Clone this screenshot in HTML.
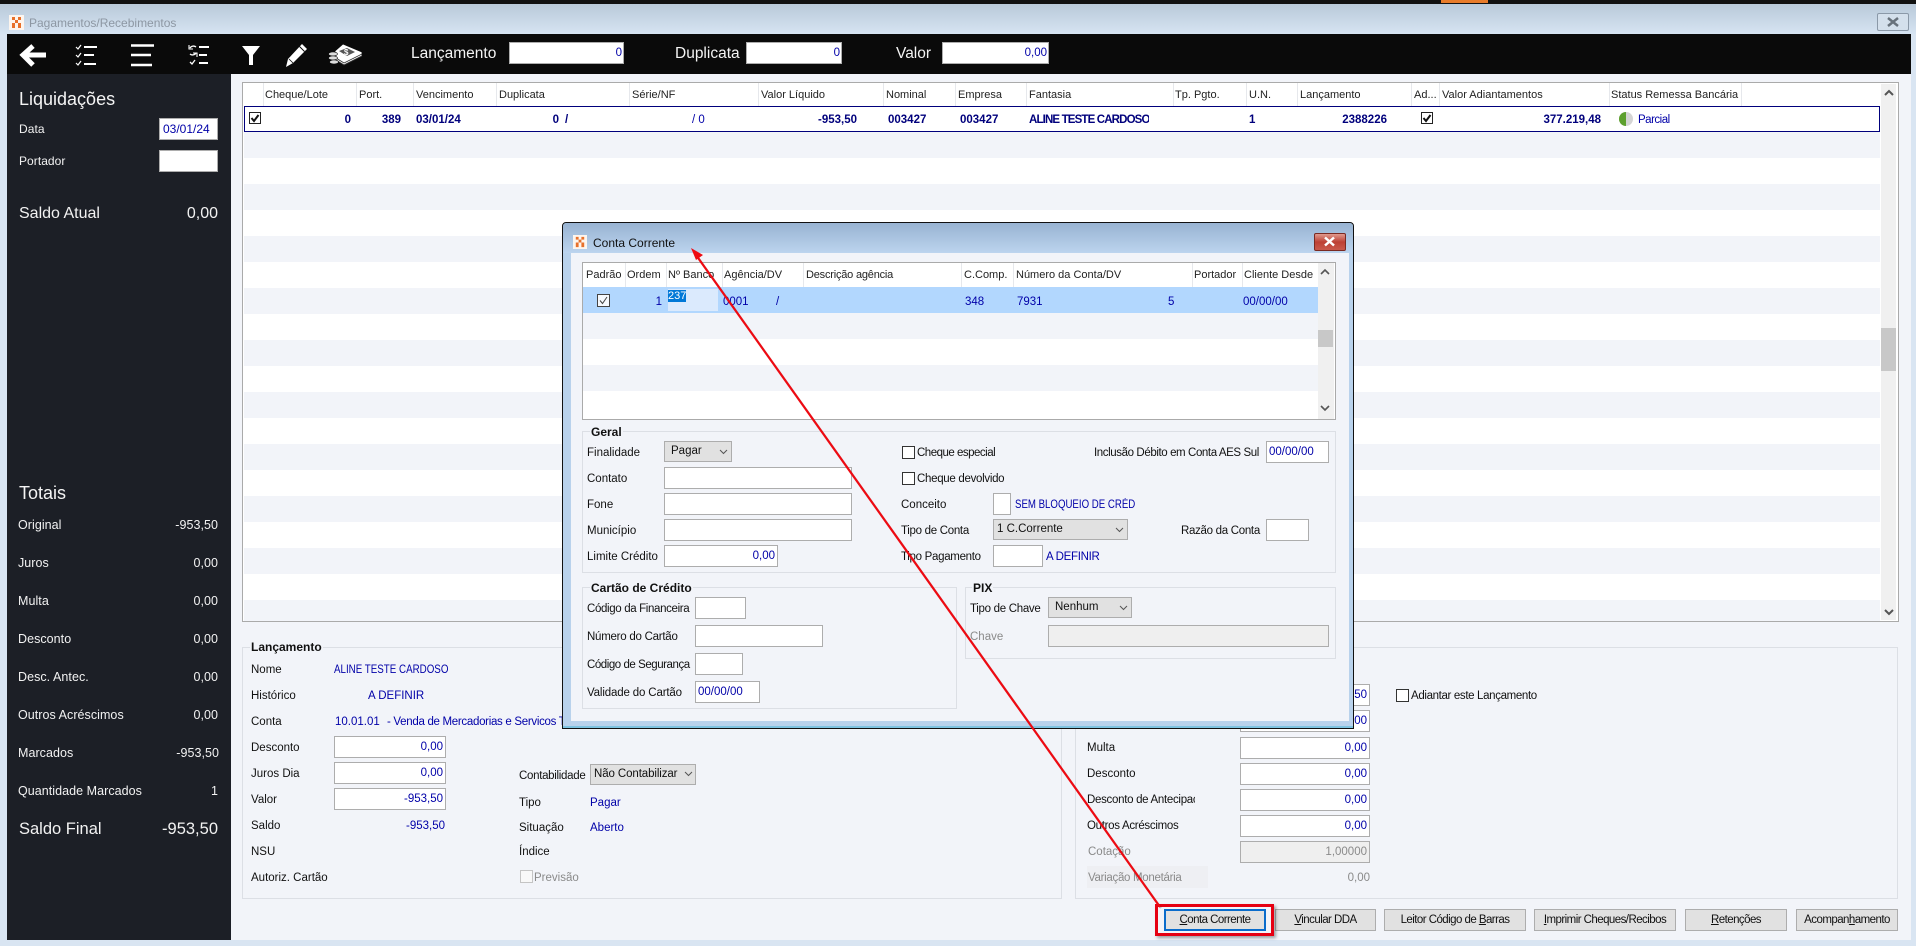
<!DOCTYPE html>
<html lang="pt"><head><meta charset="utf-8"><title>Pagamentos/Recebimentos</title>
<style>
*{box-sizing:border-box}
html,body{margin:0;padding:0}
body{width:1916px;height:946px;overflow:hidden;position:relative;background:#d9e5f2;font-family:"Liberation Sans",sans-serif;font-size:11.5px;color:#111}
div,span{position:absolute}
.t{line-height:16px;height:16px;white-space:nowrap;margin-top:1px}
.b{color:#0000a8}
.n{color:#00007c;font-weight:bold;font-size:11.5px}
.w{color:#f2f2f2;font-size:12.5px;letter-spacing:.05px}
.g{color:#8a8a8a}
.h{color:#222;font-size:11px;margin-top:0}
.r{text-align:right}
.i{background:#fff;border:1px solid #adadad}
.d{background:#efefef;border:1px solid #adadad}
.s{background:#e1e1e1;border:1px solid #adadad}
.cb{background:#fff;border:1px solid #333;width:13px;height:13px}
.f{border:1px solid #dcdfe5}
.l{font-weight:bold;background:#f2f4f9;padding:0 1px;color:#111;font-size:12px;margin-top:0}
.v{width:1px;background:#e6e8ec}
.btn{background:#e1e1e1;border:1px solid #adadad;text-align:center;line-height:20px;font-size:11.5px;color:#111;top:909px;height:22px;letter-spacing:-.55px}
.bar{background:#f2f4f9}
.k{letter-spacing:-.3px}
.c{transform:scaleX(.85);transform-origin:0 50%}
</style></head><body>
<div style="left:0;top:0;width:1916px;height:4px;background:#111"></div>
<div style="left:1441px;top:0;width:47px;height:3px;background:#e87b2a"></div>
<div style="left:0;top:4px;width:1916px;height:30px;background:linear-gradient(#b9c9d9,#d6e4f2)"></div>
<svg style="position:absolute;left:9px;top:15px" width="15" height="15" viewBox="0 0 15 15"><rect width="15" height="15" fill="#fdf5ee"/><path d="M3 2h3v3H3zM9 2h3v3H9zM6 5h3v3H6zM3 8h3v5H3zM9 8h3v5H9z" fill="#e8702a"/></svg>
<div class="t" style="left:29px;top:14px;color:#8d97a3;font-size:12px">Pagamentos/Recebimentos</div>
<div style="left:1877px;top:13px;width:32px;height:18px;border:1px solid #8b99a8;border-radius:2px;background:#d4e0ec"></div>
<svg style="position:absolute;left:1887px;top:17px" width="12" height="10" viewBox="0 0 12 10"><path d="M1 1l10 8M11 1L1 9" stroke="#68727c" stroke-width="2.500"/></svg>

<div style="left:7px;top:34px;width:1904px;height:40px;background:#0a0a0a"></div>
<svg style="position:absolute;left:7px;top:34px" width="370" height="40" viewBox="7 34 370 40" fill="none" stroke="#fff">
<path d="M46 55H24M33 46l-10 9 10 10" stroke-width="5"/>
<path d="M76 47l2 2 3-4M76 55l2 2 3-4M76 63l2 2 3-4" stroke-width="1.200"/><path d="M84 47h13M84 55h10M84 64h12" stroke-width="2"/>
<path d="M131 45.500h23M131 55h20M131 65h21" stroke-width="2.500"/>
<path d="M190 48a4 4 0 0 1 6-1M196 53a4 4 0 0 1-6 1" stroke-width="1.300"/><path d="M189 45v4h4M197 57v-4h-4" stroke-width="1.100"/><path d="M190 62l2 2 3-4" stroke-width="1.300"/><path d="M199 47h10M199 55h8M199 63h9" stroke-width="2"/>
<path d="M242 46h18l-7 9v10h-4V55z" fill="#fff" stroke="none"/>
<path d="M286 67l2-8 14-15 5 5-14 14z" fill="#fff" stroke="none"/><path d="M299.500 46.500l5 5" stroke="#0a0a0a" stroke-width="1"/><path d="M289 59l4 4" stroke="#0a0a0a" stroke-width=".8"/>
<path d="M343 44l19 8v4l-18 9-9-5v-9z" fill="#fff" stroke="#0a0a0a" stroke-width=".8"/><path d="M339 51l8-3 8 4-8 4z" fill="#555" stroke="none"/><text x="344" y="55" font-size="8" font-weight="bold" fill="#fff" stroke="none" font-family="Liberation Sans">$</text>
<path d="M336 60l8 5 18-9M336 58l8 5 18-9" stroke="#333" stroke-width=".8"/>
<ellipse cx="333" cy="54" rx="4.500" ry="2" fill="#ddd" stroke="#0a0a0a" stroke-width=".6"/><ellipse cx="333" cy="58" rx="4.500" ry="2" fill="#ddd" stroke="#0a0a0a" stroke-width=".6"/><ellipse cx="334" cy="62" rx="4.500" ry="2" fill="#ddd" stroke="#0a0a0a" stroke-width=".6"/>
</svg>
<div class="t" style="left:411px;top:45px;color:#f4f4f4;font-size:15.500px">Lançamento</div>
<div class="i r b" style="left:509px;top:42px;width:115px;height:22px;line-height:20px;padding-right:1px">0</div>
<div class="t" style="left:675px;top:45px;color:#f4f4f4;font-size:15.500px">Duplicata</div>
<div class="i r b" style="left:746px;top:42px;width:96px;height:22px;line-height:20px;padding-right:1px">0</div>
<div class="t" style="left:896px;top:45px;color:#f4f4f4;font-size:15.500px">Valor</div>
<div class="i r b" style="left:942px;top:42px;width:107px;height:22px;line-height:20px;padding-right:1px">0,00</div>

<div style="left:7px;top:74px;width:1904px;height:866px;background:#f2f4f9"></div>
<div style="left:7px;top:74px;width:224px;height:866px;background:#1c1f26"></div>
<div class="t" style="left:19px;top:89px;color:#f4f4f4;font-size:18px;line-height:18px;height:18px">Liquidações</div>
<div class="t w" style="left:19px;top:120px;font-size:12px">Data</div>
<div class="i b" style="left:159px;top:118px;width:59px;height:22px;line-height:20px;padding-left:3px;font-size:12px">03/01/24</div>
<div class="t w" style="left:19px;top:152px;font-size:12px">Portador</div>
<div class="i" style="left:159px;top:150px;width:59px;height:22px"></div>
<div class="t" style="left:19px;top:205px;color:#f2f2f2;font-size:16px">Saldo Atual</div>
<div class="t r" style="right:1698px;top:205px;color:#f2f2f2;font-size:16px">0,00</div>
<div class="t" style="left:19px;top:484px;color:#f4f4f4;font-size:18px">Totais</div>
<div class="t w" style="left:18px;top:516px">Original</div><div class="t w r" style="right:1698px;top:516px">-953,50</div>
<div class="t w" style="left:18px;top:554px">Juros</div><div class="t w r" style="right:1698px;top:554px">0,00</div>
<div class="t w" style="left:18px;top:592px">Multa</div><div class="t w r" style="right:1698px;top:592px">0,00</div>
<div class="t w" style="left:18px;top:630px">Desconto</div><div class="t w r" style="right:1698px;top:630px">0,00</div>
<div class="t w" style="left:18px;top:668px">Desc. Antec.</div><div class="t w r" style="right:1698px;top:668px">0,00</div>
<div class="t w" style="left:18px;top:706px">Outros Acréscimos</div><div class="t w r" style="right:1698px;top:706px">0,00</div>
<div class="t w" style="left:18px;top:744px">Marcados</div><div class="t w r" style="right:1697px;top:744px">-953,50</div>
<div class="t w" style="left:18px;top:782px">Quantidade Marcados</div><div class="t w r" style="right:1698px;top:782px">1</div>
<div class="t" style="left:19px;top:820px;color:#f2f2f2;font-size:16.500px">Saldo Final</div><div class="t r" style="right:1698px;top:820px;color:#f2f2f2;font-size:16.500px">-953,50</div>

<!-- main grid -->
<div style="left:242px;top:82px;width:1657px;height:540px;background:#fff;border:1px solid #aaa;border-bottom-width:1px"></div>
<div class="bar" style="left:244px;top:132px;width:1636px;height:26px"></div>
<div class="bar" style="left:244px;top:184px;width:1636px;height:26px"></div>
<div class="bar" style="left:244px;top:236px;width:1636px;height:26px"></div>
<div class="bar" style="left:244px;top:288px;width:1636px;height:26px"></div>
<div class="bar" style="left:244px;top:340px;width:1636px;height:26px"></div>
<div class="bar" style="left:244px;top:392px;width:1636px;height:26px"></div>
<div class="bar" style="left:244px;top:444px;width:1636px;height:26px"></div>
<div class="bar" style="left:244px;top:496px;width:1636px;height:26px"></div>
<div class="bar" style="left:244px;top:548px;width:1636px;height:26px"></div>
<div class="bar" style="left:244px;top:600px;width:1636px;height:21px"></div>
<div style="left:1881px;top:84px;width:15px;height:536px;background:#f0f0f0"></div>
<div style="left:1881px;top:328px;width:15px;height:43px;background:#c8c8c8"></div>
<svg style="position:absolute;left:1884px;top:89px" width="10" height="8"><path d="M1 6l4-4 4 4" fill="none" stroke="#555" stroke-width="2"/></svg>
<svg style="position:absolute;left:1884px;top:608px" width="10" height="8"><path d="M1 2l4 4 4-4" fill="none" stroke="#555" stroke-width="2"/></svg>
<div class="v" style="left:263px;top:83px;height:23px"></div><div class="v" style="left:356px;top:83px;height:23px"></div><div class="v" style="left:413px;top:83px;height:23px"></div><div class="v" style="left:496px;top:83px;height:23px"></div><div class="v" style="left:629px;top:83px;height:23px"></div><div class="v" style="left:758px;top:83px;height:23px"></div><div class="v" style="left:883px;top:83px;height:23px"></div><div class="v" style="left:955px;top:83px;height:23px"></div><div class="v" style="left:1026px;top:83px;height:23px"></div><div class="v" style="left:1173px;top:83px;height:23px"></div><div class="v" style="left:1246px;top:83px;height:23px"></div><div class="v" style="left:1297px;top:83px;height:23px"></div><div class="v" style="left:1411px;top:83px;height:23px"></div><div class="v" style="left:1439px;top:83px;height:23px"></div><div class="v" style="left:1609px;top:83px;height:23px"></div><div class="v" style="left:1741px;top:83px;height:23px"></div>
<div class="t h" style="left:265px;top:87px">Cheque/Lote</div><div class="t h" style="left:359px;top:87px">Port.</div><div class="t h" style="left:416px;top:87px">Vencimento</div><div class="t h" style="left:499px;top:87px">Duplicata</div><div class="t h" style="left:632px;top:87px">Série/NF</div><div class="t h" style="left:761px;top:87px">Valor Líquido</div><div class="t h" style="left:886px;top:87px">Nominal</div><div class="t h" style="left:958px;top:87px">Empresa</div><div class="t h" style="left:1029px;top:87px">Fantasia</div><div class="t h" style="left:1175px;top:87px">Tp. Pgto.</div><div class="t h" style="left:1249px;top:87px">U.N.</div><div class="t h" style="left:1300px;top:87px">Lançamento</div><div class="t h" style="left:1414px;top:87px">Ad...</div><div class="t h" style="left:1442px;top:87px">Valor Adiantamentos</div><div class="t h" style="left:1611px;top:87px">Status Remessa Bancária</div>
<div style="left:244px;top:106px;width:1636px;height:26px;border:1px solid #00007c;background:#fff"></div>
<svg style="position:absolute;left:249px;top:112px" width="12" height="12"><rect x=".5" y=".5" width="11" height="11" fill="#fff" stroke="#222"/><path d="M2.500 6l2.500 3 4.500-6" fill="none" stroke="#111" stroke-width="2"/></svg>
<div class="t n r" style="right:1565px;top:111px">0</div>
<div class="t n r" style="right:1515px;top:111px">389</div>
<div class="t n" style="left:416px;top:111px">03/01/24</div>
<div class="t n r" style="right:1357px;top:111px">0</div>
<div class="t n" style="left:565px;top:111px">/</div>
<div class="t b" style="left:692px;top:111px">/ 0</div>
<div class="t n r" style="right:1059px;top:111px">-953,50</div>
<div class="t n" style="left:888px;top:111px">003427</div>
<div class="t n" style="left:960px;top:111px">003427</div>
<div class="t n" style="left:1029px;top:111px;width:120px;overflow:hidden;letter-spacing:-.85px">ALINE TESTE CARDOSO</div>
<div class="t n" style="left:1249px;top:111px">1</div>
<div class="t n r" style="right:529px;top:111px">2388226</div>
<svg style="position:absolute;left:1421px;top:112px" width="12" height="12"><rect x=".5" y=".5" width="11" height="11" fill="#fff" stroke="#222"/><path d="M2.500 6l2.500 3 4.500-6" fill="none" stroke="#111" stroke-width="2"/></svg>
<div class="t n r" style="right:315px;top:111px">377.219,48</div>
<svg style="position:absolute;left:1619px;top:112px" width="14" height="14"><circle cx="7" cy="7" r="7" fill="#d4d4d4"/><path d="M7 0a7 7 0 0 0 0 14z" fill="#5da02e"/></svg>
<div class="t b k" style="left:1638px;top:111px;letter-spacing:-.5px">Parcial</div>

<!-- Lancamento -->
<div class="f" style="left:242px;top:647px;width:820px;height:252px"></div>
<div class="t l" style="left:250px;top:639px">Lançamento</div>
<div class="t" style="left:251px;top:661px">Nome</div><div class="t b c" style="left:334px;top:661px">ALINE TESTE CARDOSO</div>
<div class="t" style="left:251px;top:687px">Histórico</div><div class="t b" style="left:368px;top:687px">A DEFINIR</div>
<div class="t" style="left:251px;top:713px">Conta</div><div class="t b" style="left:335px;top:713px">10.01.01</div><div class="t b k" style="left:387px;top:713px">- Venda de Mercadorias e Servicos T</div>
<div class="t" style="left:251px;top:739px">Desconto</div><div class="i r b" style="left:334px;top:736px;width:112px;height:22px;line-height:21px;padding-right:2px">0,00</div>
<div class="t" style="left:251px;top:765px">Juros Dia</div><div class="i r b" style="left:334px;top:762px;width:112px;height:22px;line-height:21px;padding-right:2px">0,00</div>
<div class="t" style="left:251px;top:791px">Valor</div><div class="i r b" style="left:334px;top:788px;width:112px;height:22px;line-height:21px;padding-right:2px">-953,50</div>
<div class="t" style="left:251px;top:817px">Saldo</div><div class="t b r" style="right:1471px;top:817px">-953,50</div>
<div class="t" style="left:251px;top:843px">NSU</div>
<div class="t" style="left:251px;top:869px">Autoriz. Cartão</div>
<div class="t k" style="left:519px;top:767px">Contabilidade</div>
<div class="s t" style="left:590px;top:763px;width:106px;height:21px;line-height:19px;padding-left:3px;letter-spacing:-.1px">Não Contabilizar</div>
<svg style="position:absolute;left:684px;top:771px" width="9" height="6"><path d="M1 1l3.500 3.500L8 1" fill="none" stroke="#555"/></svg>
<div class="t" style="left:519px;top:794px">Tipo</div><div class="t b" style="left:590px;top:794px">Pagar</div>
<div class="t" style="left:519px;top:819px">Situação</div><div class="t b" style="left:590px;top:819px">Aberto</div>
<div class="t" style="left:519px;top:843px">Índice</div>
<div style="left:520px;top:870px;width:13px;height:13px;background:#f8f8f8;border:1px solid #c4c4c4"></div>
<div class="t g" style="left:534px;top:869px">Previsão</div>

<div class="f" style="left:1075px;top:647px;width:823px;height:252px"></div>
<div class="i r b" style="left:1240px;top:684px;width:130px;height:22px;line-height:21px;padding-right:2px">-953,50</div>
<div class="i r b" style="left:1240px;top:710px;width:130px;height:22px;line-height:21px;padding-right:2px">0,00</div>
<div class="t" style="left:1087px;top:739px">Multa</div><div class="i r b" style="left:1240px;top:737px;width:130px;height:22px;line-height:21px;padding-right:2px">0,00</div>
<div class="t" style="left:1087px;top:765px">Desconto</div><div class="i r b" style="left:1240px;top:763px;width:130px;height:22px;line-height:21px;padding-right:2px">0,00</div>
<div class="t k" style="left:1087px;top:791px;width:108px;overflow:hidden">Desconto de Antecipação</div><div class="i r b" style="left:1240px;top:789px;width:130px;height:22px;line-height:21px;padding-right:2px">0,00</div>
<div class="t k" style="left:1087px;top:817px">Outros Acréscimos</div><div class="i r b" style="left:1240px;top:815px;width:130px;height:22px;line-height:21px;padding-right:2px">0,00</div>
<div class="t g" style="left:1088px;top:843px">Cotação</div><div class="d r g" style="left:1240px;top:841px;width:130px;height:22px;line-height:21px;padding-right:2px">1,00000</div>
<div style="left:1087px;top:866px;width:121px;height:22px;background:#eeeff3"></div>
<div class="t g k" style="left:1088px;top:869px">Variação Monetária</div><div class="t g r" style="right:546px;top:869px">0,00</div>
<div class="cb" style="left:1396px;top:689px"></div><div class="t k" style="left:1411px;top:687px;letter-spacing:-.35px">Adiantar este Lançamento</div>

<!-- buttons -->
<div class="btn" style="left:1275px;width:101px"><u>V</u>incular DDA</div>
<div class="btn" style="left:1384px;width:142px">Leitor Código de <u>B</u>arras</div>
<div class="btn" style="left:1534px;width:142px"><u>I</u>mprimir Cheques/Recibos</div>
<div class="btn" style="left:1685px;width:102px"><u>R</u>etenções</div>
<div class="btn" style="left:1796px;width:102px">Acompan<u>h</u>amento</div>
<div style="left:1155px;top:904px;width:119px;height:32px;border:3px solid #e60012;box-shadow:2px 2px 3px rgba(0,0,0,.35)"></div>
<div class="btn" style="left:1164px;width:102px;border:2px solid #0a6ccb;line-height:18px"><u>C</u>onta Corrente</div>

<!-- modal -->
<div style="left:562px;top:222px;width:792px;height:507px;background:#b9d2ec;border:1px solid #111;border-radius:4px 4px 0 0;box-shadow:inset 0 -2px 0 #7fc3e0"></div>
<div style="left:563px;top:223px;width:790px;height:30px;background:linear-gradient(#98b3d2,#bcd4ee);border-radius:4px 4px 0 0"></div>
<div style="left:571px;top:253px;width:778px;height:468px;background:#f2f4f9"></div>
<svg style="position:absolute;left:573px;top:235px" width="14" height="14" viewBox="0 0 15 15"><rect width="15" height="15" fill="#fdf5ee"/><path d="M3 2h3v3H3zM9 2h3v3H9zM6 5h3v3H6zM3 8h3v5H3zM9 8h3v5H9z" fill="#e8702a"/></svg>
<div class="t" style="left:593px;top:234px;font-size:12px;color:#111">Conta Corrente</div>
<div style="left:1314px;top:233px;width:32px;height:18px;background:linear-gradient(#e09a8e,#bd4034 50%,#c9594c);border:1px solid #7a2a22;border-radius:2px"></div>
<svg style="position:absolute;left:1323px;top:236px" width="13" height="11"><path d="M2 1.500l9 8M11 1.500l-9 8" stroke="#fff" stroke-width="2.500"/></svg>

<div style="left:582px;top:262px;width:754px;height:158px;background:#fff;border:1px solid #aaa"></div>
<div style="left:583px;top:287px;width:735px;height:26px;background:#b2d7fe"></div>
<div class="bar" style="left:583px;top:313px;width:735px;height:26px"></div>
<div class="bar" style="left:583px;top:365px;width:735px;height:26px"></div>
<div style="left:1318px;top:263px;width:16px;height:156px;background:#f0f0f0"></div>
<div style="left:1318px;top:330px;width:15px;height:17px;background:#c8c8c8"></div>
<svg style="position:absolute;left:1320px;top:268px" width="10" height="8"><path d="M1 6l4-4 4 4" fill="none" stroke="#555" stroke-width="1.600"/></svg>
<svg style="position:absolute;left:1320px;top:404px" width="10" height="8"><path d="M1 2l4 4 4-4" fill="none" stroke="#555" stroke-width="1.600"/></svg>
<div class="v" style="left:625px;top:263px;height:24px"></div><div class="v" style="left:666px;top:263px;height:24px"></div><div class="v" style="left:722px;top:263px;height:24px"></div><div class="v" style="left:803px;top:263px;height:24px"></div><div class="v" style="left:961px;top:263px;height:24px"></div><div class="v" style="left:1013px;top:263px;height:24px"></div><div class="v" style="left:1192px;top:263px;height:24px"></div><div class="v" style="left:1242px;top:263px;height:24px"></div>
<div class="t h" style="left:586px;top:267px">Padrão</div><div class="t h" style="left:627px;top:267px">Ordem</div><div class="t h" style="left:668px;top:267px">Nº Banco</div><div class="t h" style="left:724px;top:267px">Agência/DV</div><div class="t h" style="left:806px;top:267px;letter-spacing:-.2px">Descrição agência</div><div class="t h" style="left:964px;top:267px">C.Comp.</div><div class="t h" style="left:1016px;top:267px">Número da Conta/DV</div><div class="t h" style="left:1194px;top:267px">Portador</div><div class="t h" style="left:1244px;top:267px">Cliente Desde</div>
<svg style="position:absolute;left:597px;top:294px" width="13" height="13"><rect x=".5" y=".5" width="12" height="12" fill="#f6f9fd" stroke="#444"/><path d="M3 6.500l2.500 3L10 3" fill="none" stroke="#444"/></svg>
<div class="t b r" style="right:1254px;top:293px">1</div>
<div style="left:668px;top:289px;width:50px;height:22px;background:#dbeafd"></div>
<div class="t" style="left:668px;top:290px;height:12px;line-height:12px;width:18px;background:#0078d7;color:#fff;font-size:11px;margin-top:0">237</div>
<div class="t b" style="left:723px;top:293px">0001</div><div class="t b" style="left:776px;top:293px">/</div><div class="t b" style="left:965px;top:293px">348</div><div class="t b" style="left:1017px;top:293px">7931</div><div class="t b" style="left:1168px;top:293px">5</div><div class="t b" style="left:1243px;top:293px">00/00/00</div>

<div class="f" style="left:582px;top:431px;width:754px;height:142px"></div>
<div class="t l" style="left:590px;top:424px">Geral</div>
<div class="t" style="left:587px;top:444px">Finalidade</div><div class="s t" style="left:664px;top:440px;width:68px;height:21px;line-height:19px;padding-left:6px">Pagar</div>
<svg style="position:absolute;left:719px;top:449px" width="9" height="6"><path d="M1 1l3.500 3.500L8 1" fill="none" stroke="#555"/></svg>
<div class="t" style="left:587px;top:470px">Contato</div><div class="i" style="left:664px;top:467px;width:188px;height:22px"></div>
<div class="t" style="left:587px;top:496px">Fone</div><div class="i" style="left:664px;top:493px;width:188px;height:22px"></div>
<div class="t" style="left:587px;top:522px">Município</div><div class="i" style="left:664px;top:519px;width:188px;height:22px"></div>
<div class="t" style="left:587px;top:548px">Limite Crédito</div><div class="i r b" style="left:664px;top:545px;width:114px;height:22px;line-height:21px;padding-right:2px">0,00</div>
<div class="cb" style="left:902px;top:446px"></div><div class="t k" style="left:917px;top:444px;letter-spacing:-.5px">Cheque especial</div>
<div class="cb" style="left:902px;top:472px"></div><div class="t k" style="left:917px;top:470px">Cheque devolvido</div>
<div class="t" style="left:901px;top:496px">Conceito</div><div class="i" style="left:993px;top:493px;width:18px;height:22px"></div><div class="t b" style="left:1015px;top:496px;transform:scaleX(.84);transform-origin:0 50%">SEM BLOQUEIO DE CRÉD</div>
<div class="t k" style="left:901px;top:522px">Tipo de Conta</div><div class="s t" style="left:993px;top:518px;width:135px;height:21px;line-height:19px;padding-left:3px">1 C.Corrente</div>
<svg style="position:absolute;left:1115px;top:527px" width="9" height="6"><path d="M1 1l3.500 3.500L8 1" fill="none" stroke="#555"/></svg>
<div class="t k" style="left:901px;top:548px">Tipo Pagamento</div><div class="i" style="left:993px;top:545px;width:50px;height:22px"></div><div class="t b k" style="left:1046px;top:548px">A DEFINIR</div>
<div class="t" style="left:1094px;top:444px;letter-spacing:-.4px">Inclusão Débito em Conta AES Sul</div><div class="i b" style="left:1266px;top:441px;width:63px;height:22px;line-height:21px;padding-left:2px">00/00/00</div>
<div class="t k" style="left:1181px;top:522px">Razão da Conta</div><div class="i" style="left:1266px;top:519px;width:43px;height:22px"></div>

<div class="f" style="left:582px;top:587px;width:375px;height:122px"></div>
<div class="t l" style="left:590px;top:580px">Cartão de Crédito</div>
<div class="t" style="left:587px;top:600px;letter-spacing:-.35px">Código da Financeira</div><div class="i" style="left:695px;top:597px;width:51px;height:22px"></div>
<div class="t k" style="left:587px;top:628px;letter-spacing:-.25px">Número do Cartão</div><div class="i" style="left:695px;top:625px;width:128px;height:22px"></div>
<div class="t" style="left:587px;top:656px;letter-spacing:-.45px">Código de Segurança</div><div class="i" style="left:695px;top:653px;width:48px;height:22px"></div>
<div class="t k" style="left:587px;top:684px;letter-spacing:-.15px">Validade do Cartão</div><div class="i b" style="left:695px;top:681px;width:65px;height:22px;line-height:21px;padding-left:2px">00/00/00</div>

<div class="f" style="left:965px;top:587px;width:371px;height:72px"></div>
<div class="t l" style="left:972px;top:580px">PIX</div>
<div class="t" style="left:970px;top:600px;letter-spacing:-.3px">Tipo de Chave</div><div class="s t" style="left:1048px;top:596px;width:84px;height:21px;line-height:19px;padding-left:6px">Nenhum</div>
<svg style="position:absolute;left:1119px;top:605px" width="9" height="6"><path d="M1 1l3.500 3.500L8 1" fill="none" stroke="#555"/></svg>
<div class="t g" style="left:970px;top:628px">Chave</div><div class="d" style="left:1048px;top:625px;width:281px;height:22px"></div>

<!-- red arrow -->
<svg style="position:absolute;left:0;top:0" width="1916" height="946" viewBox="0 0 1916 946">
<path d="M1160 907L696 255" stroke="#000" stroke-opacity=".2" stroke-width="2" transform="translate(1 1)"/>
<path d="M1160 907L696 255" stroke="#ee0a12" stroke-width="2.200" fill="none"/>
<path d="M691 248l12 7-7 5z" fill="#ee0a12"/>
</svg>
</body></html>
